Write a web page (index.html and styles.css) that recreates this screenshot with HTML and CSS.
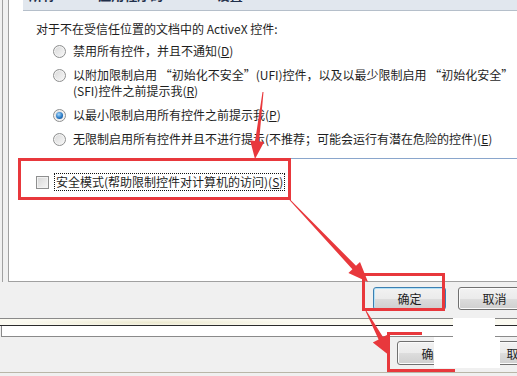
FILE: index.html
```html
<!DOCTYPE html>
<html lang="zh-CN">
<head>
    <meta charset="UTF-8">
    <title>ActiveX 设置</title>
    <link rel="stylesheet" href="styles.css">
</head>
<body>
    <div class="frame">
        <div class="panel">
            <div class="caption">
                <div class="caption-text">所有 Office 应用程序的 ActiveX 设置</div>
            </div>
            <div class="content">
                <p class="intro">对于不在受信任位置的文档中的 ActiveX 控件:</p>
                <div class="options">
                    <div class="option"><span class="radio"></span><span>禁用所有控件，并且不通知(<u>D</u>)</span></div>
                    <div class="option"><span class="radio"></span><span>以附加限制启用 “初始化不安全”(UFI)控件，以及以最少限制启用 “初始化安全”<br>(SFI)控件之前提示我(<u>R</u>)</span></div>
                    <div class="option"><span class="radio checked"></span><span>以最小限制启用所有控件之前提示我(<u>P</u>)</span></div>
                    <div class="option"><span class="radio"></span><span>无限制启用所有控件并且不进行提示(不推荐；可能会运行有潜在危险的控件)(<u>E</u>)</span></div>
                </div>
                <div class="rule"></div>
                <div class="safe">
                    <span class="checkbox"></span>
                    <span class="focus">安全模式(帮助限制控件对计算机的访问)(<u>S</u>)</span>
                </div>
            </div>
        </div>
    </div>

    <div class="buttons">
        <button class="btn default">确定</button>
        <button class="btn">取消</button>
    </div>

    <!-- the dialog behind -->
    <div class="back">
        <div class="band"></div>
        <div class="field"></div>
        <div class="buttons back-buttons">
            <button class="btn">确定</button>
            <button class="btn">取消</button>
        </div>
        <div class="back-bottom"></div>
    </div>

    <div class="blank blank-a"></div>
    <div class="blank blank-b"></div>

    <svg class="marks" width="517" height="376" viewBox="0 0 517 376">
        <g fill="none" stroke="#e8383c" stroke-width="3">
            <rect x="19.5" y="159.5" width="270" height="39"/>
            <rect x="363.5" y="274.5" width="80" height="35"/>
            <path d="M422 333.5 H388.5 V370.5 H455"/>
        </g>
        <g fill="#e8383c">
            <polygon points="262.5,92 263.5,92 259.1,141.3 264.1,141.9 255,159 250.1,140.3 255.1,140.9"/>
            <polygon points="290.4,199.7 356,265.8 360,262 368,282 348.4,273 352.4,269.2 289.6,200.3"/>
            <polygon points="366.4,310.8 383,337.1 388.8,334.1 390,356 372.8,342.5 378.6,339.5 365.6,311.2"/>
        </g>
    </svg>
</body>
</html>
```

FILE: styles.css
```css
body {
    margin: 0;
    width: 517px;
    height: 376px;
    overflow: hidden;
    position: relative;
    background-color: #f0f0f0;
    font-family: "Noto Sans CJK SC", "Microsoft YaHei", sans-serif;
    font-size: 12px;
    color: #1e1e1e;
}

.frame {
    margin-left: 2px;
    border-left: 1px solid #a0a0a0;
}

.panel {
    margin-left: 5px;
    height: 281px;
    background-color: #fff;
    border-left: 1px solid #a0a0a0;
    border-bottom: 1px solid #a0a0a0;
}

.caption {
    margin-left: 14px;
    height: 10px;
    overflow: hidden;
    background-color: #e1e7ee;
    border-bottom: 1px solid #b5bfca;
}

.caption-text {
    margin-top: -12px;
    padding-left: 6px;
    line-height: 14px;
    font-size: 13px;
    font-weight: bold;
    color: #1f2f4a;
    white-space: nowrap;
}

.content {
    padding: 10px 0 0 27px;
}

.intro {
    margin: 0;
    line-height: 16px;
}

.options {
    display: flex;
    flex-direction: column;
    gap: 8px;
    margin: 6px 0 0 17px;
}

.option {
    display: flex;
    gap: 7px;
    line-height: 16px;
    white-space: nowrap;
}

.radio {
    flex: none;
    position: relative;
    width: 11px;
    height: 11px;
    margin-top: 2px;
    border: 1px solid #8e8f8f;
    border-radius: 50%;
    background: linear-gradient(135deg, #d8d8d8, #f8f8f8);
    box-shadow: inset 0 0 0 1px #f4f4f4;
}

.radio.checked::after {
    content: "";
    position: absolute;
    left: 2px;
    top: 2px;
    width: 7px;
    height: 7px;
    border-radius: 50%;
    background: radial-gradient(circle at 40% 35%, #a8d8fb, #2a7bc6 55%, #0d3d7c);
}

.rule {
    height: 1px;
    margin: 11px 0 0 -18px;
    background-color: #8aa6cc;
}

.safe {
    display: flex;
    align-items: center;
    gap: 5px;
    margin-top: 14px;
    line-height: 16px;
}

.checkbox {
    flex: none;
    width: 11px;
    height: 11px;
    border: 1px solid #8e8f8f;
    background: linear-gradient(135deg, #d6d6d6, #f6f6f6);
    box-shadow: inset 0 0 0 1px #f2f2f2;
}

.focus {
    padding: 0 1px;
    border: 1px dotted #111;
    white-space: nowrap;
}

.buttons {
    display: flex;
    gap: 12px;
    padding: 5px 0 0 373px;
}

.btn {
    flex: none;
    width: 73px;
    height: 23px;
    padding: 0;
    font-family: inherit;
    font-size: 12px;
    color: #1e1e1e;
    border: 1px solid #707070;
    border-radius: 3px;
    background: linear-gradient(#f2f2f2 0%, #ebebeb 50%, #dddddd 51%, #cfcfcf 100%);
    box-shadow: inset 0 0 0 1px #fbfbfb;
}

.btn.default {
    border-color: #3c7fb1;
    box-shadow: inset 0 0 0 1px #b4e2f8;
}

.back {
    margin-top: 8px;
}

.band {
    height: 6px;
    border-top: 1px solid #8a8a8a;
    border-bottom: 1px solid #2b2b2b;
    background: radial-gradient(ellipse 40% 90% at 30% 60%, #ece9cf, #fbfaf1 70%);
}

.field {
    height: 10px;
    margin-left: 1px;
    background-color: #fff;
    border-left: 1px solid #8a8a8a;
    border-bottom: 1px solid #8a8a8a;
}

.back-buttons {
    padding: 4px 0 0 397px;
}

.back-buttons .btn {
    height: 24px;
}

.back-bottom {
    margin-top: 7px;
    border-top: 1px solid #b9b6a8;
}

.blank {
    position: absolute;
    background-color: #fff;
}

.blank-a {
    left: 453px;
    top: 318px;
    width: 42px;
    height: 19px;
}

.blank-b {
    left: 434px;
    top: 337px;
    width: 66px;
    height: 31px;
}

.marks {
    position: absolute;
    left: 0;
    top: 0;
    pointer-events: none;
}
```
